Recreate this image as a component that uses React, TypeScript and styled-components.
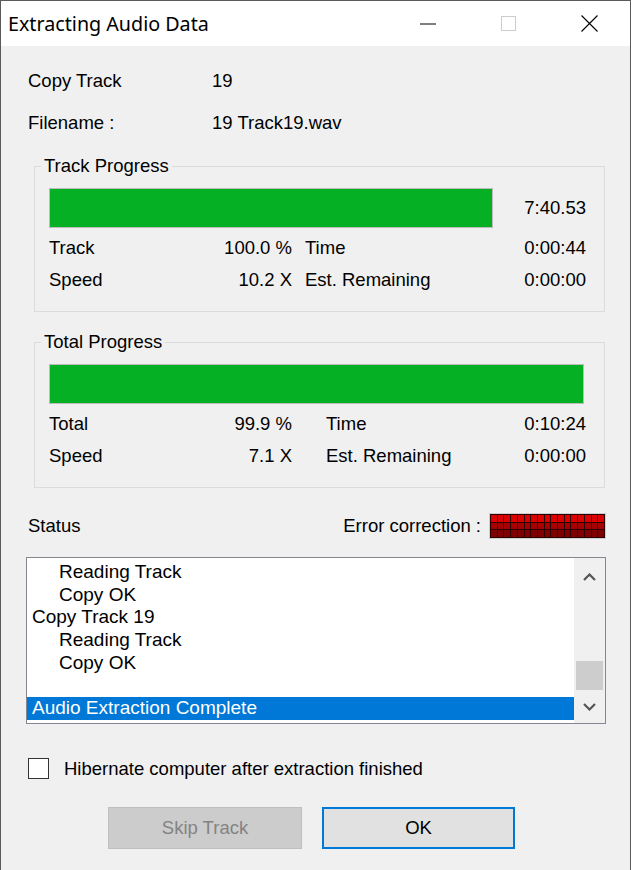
import React from "react";
import styled, { createGlobalStyle } from "styled-components";

const GlobalStyle = createGlobalStyle`
  html, body { margin: 0; padding: 0; background: #f0f0f0; }
  body {
    font-family: "Liberation Sans", Arial, sans-serif;
    font-size: 18.5px;
    color: #000;
  }
  * { box-sizing: border-box; }
`;

const Window = styled.div`
  width: 631px;
  height: 870px;
  overflow: hidden;
  border: 1px solid #5a5a5a;
  border-bottom: none;
  background: #f0f0f0;
  display: flex;
  flex-direction: column;
`;

const TitleBar = styled.div`
  height: 45px;
  flex-shrink: 0;
  background: #fff;
  display: flex;
  align-items: center;
`;

const Title = styled.div`
  flex: 1;
  padding-left: 7px;
  font-family: "Noto Sans", "Segoe UI", sans-serif;
  font-size: 19.7px;
  line-height: 45px;
  white-space: nowrap;
`;

const CaptionButton = styled.div`
  width: 81px;
  height: 45px;
  display: flex;
  align-items: center;
  justify-content: center;
`;

const InfoList = styled.div`
  padding: 14px 0 0 27px;
`;

const InfoRow = styled.div`
  display: grid;
  grid-template-columns: 184px 1fr;
  height: 42px;
  line-height: 42px;
`;

const GroupBox = styled.fieldset<{ $mt: number }>`
  margin: ${(p) => p.$mt}px 25px 0 33px;
  padding: 0;
  min-width: 0;
  border: 1px solid #dcdcdc;
`;

const Legend = styled.legend`
  margin-left: 6px;
  padding: 0 3px;
  font-size: 18.5px;
  line-height: 20px;
`;

const GroupBody = styled.div`
  padding: 12px 18px 15px 14px;
`;

const BarRow = styled.div`
  height: 40px;
  display: flex;
  align-items: center;
  justify-content: space-between;
`;

const Bar = styled.div<{ $w: number }>`
  width: ${(p) => p.$w}px;
  height: 40px;
  border: 1px solid #bcbcbc;
  background: #e6e6e6;
`;

const BarFill = styled.div`
  height: 100%;
  background: #06b025;
`;

const Stats = styled.div`
  margin-top: 4px;
  display: grid;
  grid-template-columns: 100px 143px 1fr auto;
  grid-auto-rows: 32px;
  line-height: 32px;
  white-space: nowrap;
`;

const StatValue = styled.span`
  text-align: right;
`;

const StatLabel = styled.span<{ $indent: number }>`
  padding-left: ${(p) => p.$indent}px;
`;

const StatusRow = styled.div`
  margin: 24px 25px 0 27px;
  height: 28px;
  display: flex;
  align-items: center;
  justify-content: space-between;
`;

const ErrorGroup = styled.div`
  display: flex;
  align-items: center;
  gap: 9px;
`;

const Led = styled.div`
  width: 115px;
  height: 24px;
  padding: 1px;
  background: #2a0000;
  display: grid;
  grid-template-columns: repeat(17, 1fr);
  grid-template-rows: repeat(3, 1fr);
  gap: 1px;
  box-shadow: 0 0 0 1px #cfcfcf;
`;

const LedCell = styled.div<{ $row: number }>`
  background: ${(p) => ["#dc0000", "#a80000", "#800000"][p.$row]};
`;

const ListBox = styled.div`
  margin: 17px 24px 0 25px;
  height: 167px;
  border: 1px solid #828790;
  background: #fff;
  display: flex;
`;

const ListItems = styled.div`
  flex: 1;
  padding-top: 3px;
  font-size: 19px;
  line-height: 22.7px;
  overflow: hidden;
  white-space: nowrap;
`;

const ListItem = styled.div<{ $indent?: boolean; $selected?: boolean }>`
  height: 22.7px;
  padding-left: ${(p) => (p.$indent ? 32 : 5)}px;
  background: ${(p) => (p.$selected ? "#0078d7" : "transparent")};
  color: ${(p) => (p.$selected ? "#fff" : "#000")};
`;

const ScrollBar = styled.div`
  width: 31px;
  background: #f0f0f0;
  display: flex;
  flex-direction: column;
`;

const ScrollButton = styled.div<{ $h: number }>`
  height: ${(p) => p.$h}px;
  display: flex;
  align-items: center;
  justify-content: center;
`;

const ScrollTrack = styled.div`
  flex: 1;
  display: flex;
  flex-direction: column;
  justify-content: flex-end;
  align-items: center;
`;

const Thumb = styled.div`
  width: 27px;
  height: 29px;
  background: #cdcdcd;
`;

const CheckRow = styled.label`
  margin: 34px 0 0 27px;
  height: 21px;
  display: flex;
  align-items: center;
  gap: 15px;
  line-height: 21px;
`;

const CheckBox = styled.span`
  width: 21px;
  height: 21px;
  border: 1px solid #333;
  background: #fff;
`;

const ButtonRow = styled.div`
  margin: 28px 0 0 107px;
  display: flex;
  gap: 20px;
`;

const Button = styled.button<{ $primary?: boolean }>`
  width: ${(p) => (p.$primary ? 193 : 194)}px;
  height: 42px;
  font-family: inherit;
  font-size: 18.5px;
  padding: 0;
  background: ${(p) => (p.$primary ? "#e1e1e1" : "#cccccc")};
  border: ${(p) => (p.$primary ? "2px solid #0078d7" : "1px solid #bfbfbf")};
  color: ${(p) => (p.$primary ? "#000" : "#838383")};
`;

const Chevron = ({ up }: { up?: boolean }) => (
  <svg width="13" height="8" viewBox="0 0 13 8">
    <polyline
      points={up ? "1,7 6.5,1.5 12,7" : "1,1 6.5,6.5 12,1"}
      fill="none"
      stroke="#555555"
      strokeWidth="2.2"
    />
  </svg>
);

type Stat = [string, string, string, string];

const ProgressGroup = ({
  title,
  mt,
  barWidth,
  pct,
  barLabel,
  indent,
  rows,
}: {
  title: string;
  mt: number;
  barWidth: number;
  pct: number;
  barLabel?: string;
  indent: number;
  rows: Stat[];
}) => (
  <GroupBox $mt={mt}>
    <Legend>{title}</Legend>
    <GroupBody>
      <BarRow>
        <Bar $w={barWidth}>
          <BarFill style={{ width: `${pct}%` }} />
        </Bar>
        {barLabel && <span>{barLabel}</span>}
      </BarRow>
      <Stats>
        {rows.map((r) => (
          <React.Fragment key={r[0]}>
            <span>{r[0]}</span>
            <StatValue>{r[1]}</StatValue>
            <StatLabel $indent={indent}>{r[2]}</StatLabel>
            <StatValue>{r[3]}</StatValue>
          </React.Fragment>
        ))}
      </Stats>
    </GroupBody>
  </GroupBox>
);

export default function App() {
  const log: { text: string; indent?: boolean; selected?: boolean }[] = [
    { text: "Reading Track", indent: true },
    { text: "Copy OK", indent: true },
    { text: "Copy Track 19" },
    { text: "Reading Track", indent: true },
    { text: "Copy OK", indent: true },
    { text: "" },
    { text: "Audio Extraction Complete", selected: true },
  ];

  return (
    <>
      <GlobalStyle />
      <Window>
        <TitleBar>
          <Title>Extracting Audio Data</Title>
          <CaptionButton>
            <svg width="16" height="2" viewBox="0 0 16 2">
              <line x1="0" y1="1" x2="16" y2="1" stroke="#000" strokeWidth="1" />
            </svg>
          </CaptionButton>
          <CaptionButton>
            <svg width="15" height="15" viewBox="0 0 15 15">
              <rect x="0.5" y="0.5" width="14" height="14" fill="none" stroke="#cccccc" />
            </svg>
          </CaptionButton>
          <CaptionButton>
            <svg width="17" height="17" viewBox="0 0 17 17">
              <line x1="0.5" y1="0.5" x2="16.5" y2="16.5" stroke="#000" strokeWidth="1.1" />
              <line x1="16.5" y1="0.5" x2="0.5" y2="16.5" stroke="#000" strokeWidth="1.1" />
            </svg>
          </CaptionButton>
        </TitleBar>

        <InfoList>
          <InfoRow>
            <span>Copy Track</span>
            <span>19</span>
          </InfoRow>
          <InfoRow>
            <span>Filename :</span>
            <span>19 Track19.wav</span>
          </InfoRow>
        </InfoList>

        <ProgressGroup
          title="Track Progress"
          mt={12}
          barWidth={444}
          pct={100}
          barLabel="7:40.53"
          indent={13}
          rows={[
            ["Track", "100.0 %", "Time", "0:00:44"],
            ["Speed", "10.2 X", "Est. Remaining", "0:00:00"],
          ]}
        />

        <ProgressGroup
          title="Total Progress"
          mt={20}
          barWidth={535}
          pct={100}
          indent={34}
          rows={[
            ["Total", "99.9 %", "Time", "0:10:24"],
            ["Speed", "7.1 X", "Est. Remaining", "0:00:00"],
          ]}
        />

        <StatusRow>
          <span>Status</span>
          <ErrorGroup>
            <span>Error correction :</span>
            <Led>
              {Array.from({ length: 51 }).map((_, i) => (
                <LedCell key={i} $row={Math.floor(i / 17)} />
              ))}
            </Led>
          </ErrorGroup>
        </StatusRow>

        <ListBox>
          <ListItems>
            {log.map((l, i) => (
              <ListItem key={i} $indent={l.indent} $selected={l.selected}>
                {l.text}
              </ListItem>
            ))}
          </ListItems>
          <ScrollBar>
            <ScrollButton $h={38}>
              <Chevron up />
            </ScrollButton>
            <ScrollTrack>
              <Thumb />
            </ScrollTrack>
            <ScrollButton $h={33}>
              <Chevron />
            </ScrollButton>
          </ScrollBar>
        </ListBox>

        <CheckRow>
          <CheckBox />
          <span>Hibernate computer after extraction finished</span>
        </CheckRow>

        <ButtonRow>
          <Button disabled>Skip Track</Button>
          <Button $primary>OK</Button>
        </ButtonRow>
      </Window>
    </>
  );
}
